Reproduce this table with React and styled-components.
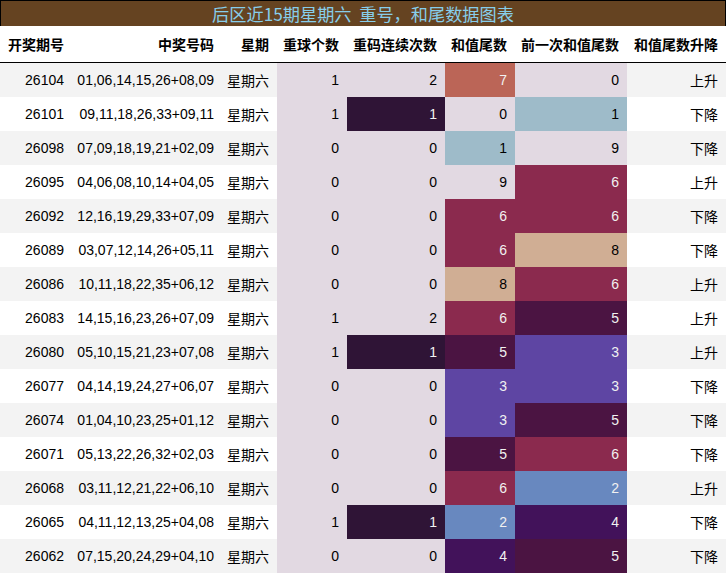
import styled, { createGlobalStyle } from "styled-components";

const GlobalStyle = createGlobalStyle`
  body {
    margin: 0;
    background: #ffffff;
    font-family: "Liberation Sans", "Noto Sans CJK SC", sans-serif;
  }
`;

// twilight-like colours for the tail digits 0..9
const palette = [
  "#e2d9e2",
  "#9ebbc9",
  "#6888bf",
  "#5e45a3",
  "#42125a",
  "#4b1442",
  "#8b2a4e",
  "#bb6557",
  "#d0ae94",
  "#e2d9e2",
];
const darkText = [false, false, true, true, true, true, true, true, false, false];

const repeatColor = (v) => (v === 1 ? "#2f1436" : "#e2d9e2");

const rows = [
  [26104, "01,06,14,15,26+08,09", 1, 2, 7, 0, "上升"],
  [26101, "09,11,18,26,33+09,11", 1, 1, 0, 1, "下降"],
  [26098, "07,09,18,19,21+02,09", 0, 0, 1, 9, "下降"],
  [26095, "04,06,08,10,14+04,05", 0, 0, 9, 6, "上升"],
  [26092, "12,16,19,29,33+07,09", 0, 0, 6, 6, "下降"],
  [26089, "03,07,12,14,26+05,11", 0, 0, 6, 8, "下降"],
  [26086, "10,11,18,22,35+06,12", 0, 0, 8, 6, "上升"],
  [26083, "14,15,16,23,26+07,09", 1, 2, 6, 5, "上升"],
  [26080, "05,10,15,21,23+07,08", 1, 1, 5, 3, "上升"],
  [26077, "04,14,19,24,27+06,07", 0, 0, 3, 3, "下降"],
  [26074, "01,04,10,23,25+01,12", 0, 0, 3, 5, "下降"],
  [26071, "05,13,22,26,32+02,03", 0, 0, 5, 6, "下降"],
  [26068, "03,11,12,21,22+06,10", 0, 0, 6, 2, "上升"],
  [26065, "04,11,12,13,25+04,08", 1, 1, 2, 4, "下降"],
  [26062, "07,15,20,24,29+04,10", 0, 0, 4, 5, "下降"],
];

const headers = ["开奖期号", "中奖号码", "星期", "重球个数", "重码连续次数", "和值尾数", "前一次和值尾数", "和值尾数升降"];
const widths = [72, 150, 55, 70, 98, 70, 112, 99];

const Wrapper = styled.div`
  width: 726px;
`;

const Title = styled.div`
  height: 25px;
  border: 1px solid #000;
  border-bottom: none;
  background: #654321;
  color: #87ceeb;
  font-family: "Noto Sans CJK SC", sans-serif;
  font-size: 17.2px;
  line-height: 25px;
  text-align: center;
  white-space: pre;
`;

const Table = styled.table`
  width: 726px;
  table-layout: fixed;
  border-collapse: collapse;
  border-spacing: 0;
  font-size: 14px;
`;

const Head = styled.th`
  height: 36px;
  padding: 0 8px 0 0;
  text-align: right;
  font-weight: bold;
  font-family: "Noto Sans CJK SC", sans-serif;
  font-size: 14px;
  color: #000;
  border-bottom: 1px solid #000;
  white-space: nowrap;
`;

const Row = styled.tr`
  background: ${(p) => (p.$odd ? "#f3f3f3" : "#ffffff")};
`;

const Cell = styled.td`
  height: 34px;
  padding: 0 8px 0 0;
  text-align: right;
  color: ${(p) => (p.$light ? "#f1f1f1" : "#000")};
  background: ${(p) => p.$bg || "transparent"};
  white-space: nowrap;
`;

export default function App() {
  return (
    <Wrapper>
      <GlobalStyle />
      <Title>{"后区近15期星期六  重号，和尾数据图表"}</Title>
      <Table>
        <colgroup>
          {widths.map((w, i) => (
            <col key={i} style={{ width: w }} />
          ))}
        </colgroup>
        <thead>
          <tr>
            {headers.map((h) => (
              <Head key={h}>{h}</Head>
            ))}
          </tr>
        </thead>
        <tbody>
          {rows.map((r, i) => (
            <Row key={r[0]} $odd={i % 2 === 0}>
              <Cell>{r[0]}</Cell>
              <Cell>{r[1]}</Cell>
              <Cell>星期六</Cell>
              <Cell $bg="#e2d9e2">{r[2]}</Cell>
              <Cell $bg={repeatColor(r[3])} $light={r[3] === 1}>
                {r[3]}
              </Cell>
              <Cell $bg={palette[r[4]]} $light={darkText[r[4]]}>
                {r[4]}
              </Cell>
              <Cell $bg={palette[r[5]]} $light={darkText[r[5]]}>
                {r[5]}
              </Cell>
              <Cell>{r[6]}</Cell>
            </Row>
          ))}
        </tbody>
      </Table>
    </Wrapper>
  );
}
